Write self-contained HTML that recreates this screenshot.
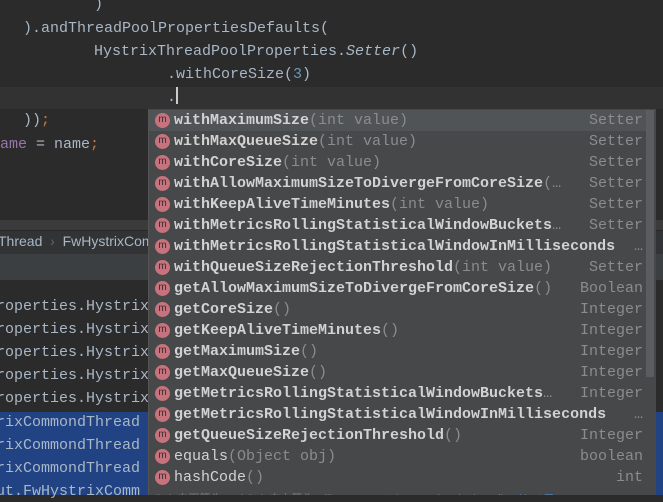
<!DOCTYPE html>
<html><head><style>
body{margin:0;width:663px;height:495px;overflow:hidden;background:#2b2b2b;position:relative;font-family:"Liberation Mono",monospace;font-size:15px}
.a{position:absolute;white-space:pre;line-height:21px}
.ed{color:#a9b7c6}
#pop{position:absolute;left:148px;top:109px;width:507px;height:386px;background:#46484a;border-left:1px solid #555;overflow:hidden}
.r{position:absolute;left:0;width:497px;height:21px;line-height:21px;white-space:pre}
.r .i{position:absolute;left:6px;top:3px;width:15px;height:15px;border-radius:50%;background:#c7737d;color:#3a2a2c;font-size:10px;line-height:14px;text-align:center;font-family:"Liberation Sans",sans-serif}
.r .n{position:absolute;left:25px;color:#d2d2d2;font-weight:bold}
.r .n span{font-weight:normal;color:#8a8c8e}
.r .n.p{font-weight:normal}
.r .t{position:absolute;right:3px;color:#8a8c8e}
</style></head><body>
<div style="position:absolute;left:0;top:87px;width:663px;height:22px;background:#323232"></div>
<div class="a ed" style="left:94px;top:-6px">)</div>
<div class="a ed" style="left:23px;top:18px">).andThreadPoolPropertiesDefaults(</div>
<div class="a ed" style="left:94px;top:41px">HystrixThreadPoolProperties.<i>Setter</i>()</div>
<div class="a ed" style="left:167px;top:64px">.withCoreSize(<span style="color:#6897bb">3</span>)</div>
<div class="a ed" style="left:167px;top:87px">.<span style="display:inline-block;width:2px;height:17px;background:#ccc;vertical-align:-3px"></span></div>
<div class="a ed" style="left:23px;top:110px">))<span style="color:#cc7832">;</span></div>
<div class="a" style="left:-9px;top:134px;color:#9876aa">name <span style="color:#a9b7c6">= name</span><span style="color:#cc7832">;</span></div>
<div style="position:absolute;left:0;top:220px;width:663px;height:10px;background:#3b3b3b"></div>
<div style="position:absolute;left:0;top:230px;width:663px;height:23px;background:#313335;border-top:1px solid #282828"></div>
<div class="a" style="left:-2px;top:231px;color:#a9b7c6;font-family:'Liberation Sans',sans-serif;font-size:14px">Thread  <span style="color:#666">›</span>  FwHystrixComm</div>
<div style="position:absolute;left:0;top:254px;width:663px;height:26px;background:#3c3f41;border-bottom:1px solid #2a2a2a"></div>
<div class="a ed" style="left:-4px;top:296px">roperties.Hystrix</div>
<div class="a ed" style="left:-4px;top:319px">roperties.Hystrix</div>
<div class="a ed" style="left:-4px;top:342px">roperties.Hystrix</div>
<div class="a ed" style="left:-4px;top:365px">roperties.Hystrix</div>
<div class="a ed" style="left:-4px;top:388px">roperties.Hystrix</div>
<div style="position:absolute;left:0;top:412px;width:663px;height:83px;background:#214283"></div>
<div class="a ed" style="left:-4px;top:412px">rixCommondThread</div>
<div class="a ed" style="left:-4px;top:435px">rixCommondThread</div>
<div class="a ed" style="left:-4px;top:458px">rixCommondThread</div>
<div class="a ed" style="left:-4px;top:481px">ut.FwHystrixComm</div>
<div id="pop">
<div style="position:absolute;left:0;top:1px;width:497px;height:21px;background:#515457"></div>
<div style="position:absolute;right:2px;top:1px;width:8px;height:267px;background:#5b5e60"></div>
<div class="r" style="top:1px"><div class="i">m</div><div class="n">withMaximumSize<span>(int value)</span></div><div class="t">Setter</div></div>
<div class="r" style="top:22px"><div class="i">m</div><div class="n">withMaxQueueSize<span>(int value)</span></div><div class="t">Setter</div></div>
<div class="r" style="top:43px"><div class="i">m</div><div class="n">withCoreSize<span>(int value)</span></div><div class="t">Setter</div></div>
<div class="r" style="top:64px"><div class="i">m</div><div class="n">withAllowMaximumSizeToDivergeFromCoreSize<span>(…</span></div><div class="t">Setter</div></div>
<div class="r" style="top:85px"><div class="i">m</div><div class="n">withKeepAliveTimeMinutes<span>(int value)</span></div><div class="t">Setter</div></div>
<div class="r" style="top:106px"><div class="i">m</div><div class="n">withMetricsRollingStatisticalWindowBuckets<span>…</span></div><div class="t">Setter</div></div>
<div class="r" style="top:127px"><div class="i">m</div><div class="n">withMetricsRollingStatisticalWindowInMilliseconds</div><div class="t">…</div></div>
<div class="r" style="top:148px"><div class="i">m</div><div class="n">withQueueSizeRejectionThreshold<span>(int value)</span></div><div class="t">Setter</div></div>
<div class="r" style="top:169px"><div class="i">m</div><div class="n">getAllowMaximumSizeToDivergeFromCoreSize<span>()</span></div><div class="t">Boolean</div></div>
<div class="r" style="top:190px"><div class="i">m</div><div class="n">getCoreSize<span>()</span></div><div class="t">Integer</div></div>
<div class="r" style="top:211px"><div class="i">m</div><div class="n">getKeepAliveTimeMinutes<span>()</span></div><div class="t">Integer</div></div>
<div class="r" style="top:232px"><div class="i">m</div><div class="n">getMaximumSize<span>()</span></div><div class="t">Integer</div></div>
<div class="r" style="top:253px"><div class="i">m</div><div class="n">getMaxQueueSize<span>()</span></div><div class="t">Integer</div></div>
<div class="r" style="top:274px"><div class="i">m</div><div class="n">getMetricsRollingStatisticalWindowBuckets<span>…</span></div><div class="t">Integer</div></div>
<div class="r" style="top:295px"><div class="i">m</div><div class="n">getMetricsRollingStatisticalWindowInMilliseconds</div><div class="t">…</div></div>
<div class="r" style="top:316px"><div class="i">m</div><div class="n">getQueueSizeRejectionThreshold<span>()</span></div><div class="t">Integer</div></div>
<div class="r" style="top:337px"><div class="i">m</div><div class="n p">equals<span>(Object obj)</span></div><div class="t">boolean</div></div>
<div class="r" style="top:358px"><div class="i">m</div><div class="n p">hashCode<span>()</span></div><div class="t">int</div></div>
<div class="a" style="left:5px;top:380px;font-size:11px;color:#777;font-family:'Liberation Sans','Noto Sans CJK SC',sans-serif">Ctrl+向下箭头 and Ctrl+向上箭头 will move caret down and up in the editor <span style="color:#589df6">Next Tip</span></div>
</div>
</body></html>
